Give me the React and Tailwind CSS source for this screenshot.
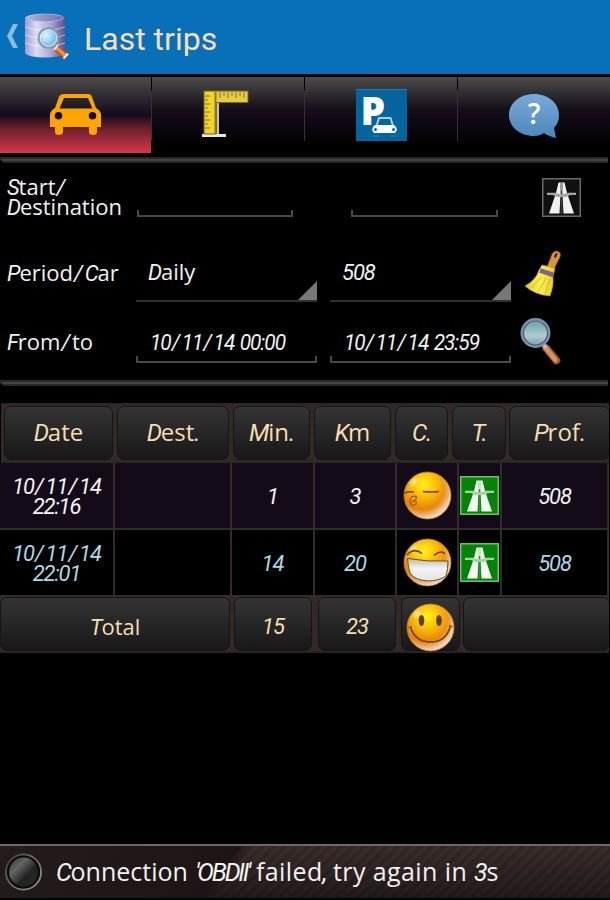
import React from "react";

const RUNS = /([0-9A-Z]+)|(\/)|([:.,'])|([a-z]+)|(\s+)/g;

function Lcd({ children, className = "", tight }) {
  const runs = [...children.matchAll(RUNS)];
  const spacing = tight ? "tracking-[-0.09em]" : "tracking-[-0.05em]";
  return (
    <span className={`whitespace-pre ${className}`}>
      {runs.map((m, i) => {
        if (m[1]) return <span key={i} className={`font-[Roboto,sans-serif] italic ${spacing}`}>{m[1]}</span>;
        if (m[2]) return <span key={i} className="font-[Roboto,sans-serif] italic pl-[0.05em] pr-[0.08em]">{m[2]}</span>;
        if (m[3]) return <span key={i} className={`font-[Roboto,sans-serif] italic ${spacing}`}>{m[3]}</span>;
        if (m[5]) return <span key={i}>{m[5]}</span>;
        return <span key={i} className="font-['Open_Sans',sans-serif]">{m[4]}</span>;
      })}
    </span>
  );
}

function DatabaseIcon() {
  return (
    <svg width="48" height="50" viewBox="0 0 48 50">
      <defs>
        <linearGradient id="db" x1="0" x2="1">
          <stop offset="0" stopColor="#9c9ad0" /><stop offset=".28" stopColor="#dcdbf5" />
          <stop offset=".65" stopColor="#a8a6d2" /><stop offset="1" stopColor="#55538a" />
        </linearGradient>
        <linearGradient id="dbTop" x1="0" x2="1">
          <stop offset="0" stopColor="#b4b2dc" /><stop offset="1" stopColor="#6f6da2" />
        </linearGradient>
        <radialGradient id="dbLens" cx=".35" cy=".35">
          <stop offset="0" stopColor="#e2f6ff" /><stop offset="1" stopColor="#7fc4ee" />
        </radialGradient>
      </defs>
      <path d="M0 6C0 1 40 1 40 6V41C37 47 3 47 0 41Z" fill="url(#db)" />
      <ellipse cx="20" cy="5.800" rx="18.500" ry="3.800" fill="url(#dbTop)" stroke="#c5c3ec" strokeWidth=".6" />
      <path d="M0 15Q20 22 40 15M0 23Q20 30 40 23M0 31Q20 38 40 31" fill="none" stroke="#f2f1ff" strokeWidth="1" opacity=".6" />
      <path d="M31 36L42 45" stroke="#b9532a" strokeWidth="6.500" />
      <path d="M31.500 36L41.500 44.500" stroke="#ff8b3c" strokeWidth="3.500" />
      <path d="M43 41.500l-4.500 5M33 33l-4 5" stroke="#eee" strokeWidth="2" />
      <circle cx="23.500" cy="26" r="9.800" fill="url(#dbLens)" stroke="#8a9a9e" strokeWidth="2" />
      <circle cx="23.500" cy="26" r="8.300" fill="none" stroke="#d9f2fb" strokeWidth=".8" />
    </svg>
  );
}

function CarIcon() {
  return (
    <svg width="52" height="42" viewBox="0 0 52 42">
      <path fillRule="evenodd" fill="#ffa500" d="M14 0H38Q41 0 42 3L46 14Q51 17 51 21V33H47V38Q47 41 43 41Q39 41 39 38V33H13V38Q13 41 9 41Q5 41 5 38V33H0V21Q0 17 5 14L9 3Q10 0 14 0ZM14 4L9.500 14.500H42.500L38 4ZM8.500 18a3.800 3.800 0 100 7.600a3.800 3.800 0 000-7.600ZM42.500 18a3.800 3.800 0 100 7.600a3.800 3.800 0 000-7.600Z" />
    </svg>
  );
}

function RulerIcon() {
  return (
    <svg width="48" height="48" viewBox="0 0 48 48">
      <path d="M16 12V44" stroke="#c3c3cc" strokeWidth="2" />
      <path d="M0 45.500H24" stroke="#e5e5ea" strokeWidth="3" />
      <path d="M2 1H46V12.500H14.500V44H2Z" fill="#e3cd48" stroke="#7b6412" />
      <path d="M3 2H12V43H3Z" fill="#f0d528" />
      <path d="M13.500 2V44" stroke="#967819" strokeWidth="2" />
      <path d="M3 6h5M3 10h3M3 14h5M3 18h3M3 22h5M3 26h3M3 30h5M3 34h3M3 38h5M18 2v6M22 2v4M26 2v6M30 2v4M34 2v6M38 2v4M42 2v6" stroke="#8d751b" strokeWidth="1" />
    </svg>
  );
}

function ParkingIcon() {
  return (
    <div className="relative h-[52px] w-[51px] border-t border-[#2c79ad] bg-[#04659e]">
      <span className="absolute left-[5px] top-[-1px] font-['Open_Sans',sans-serif] text-[39px] leading-[42px] font-extrabold text-white">P</span>
      <svg className="absolute left-[15px] top-[25px]" width="28" height="23" viewBox="0 0 28 23">
        <path d="M5 1H22L26 10Q28 14 26 18H22V22H19V19H8V22H5V18H1Q-1 14 2 10Z" fill="#04659e" />
        <path d="M5.500 11L8 3H19.500L22 11" fill="none" stroke="#a9cfe4" strokeWidth="2" />
        <path d="M4 10H23Q26 12 26 15L24 18H3L1 15Q1 12 4 10Z" fill="white" />
        <circle cx="4.500" cy="14.500" r="1.500" fill="#04659e" /><circle cx="22.500" cy="14.500" r="1.500" fill="#04659e" />
        <path d="M2 21h6M19 21h6" stroke="#1e75aa" strokeWidth="1.500" />
      </svg>
    </div>
  );
}

function HelpIcon() {
  return (
    <div className="relative h-[46px] w-[52px]">
      <svg width="52" height="46" viewBox="0 0 52 46">
        <defs><linearGradient id="bub" x2="0" y2="1"><stop stopColor="#78aada" /><stop offset="1" stopColor="#4c86ba" /></linearGradient></defs>
        <path d="M26 1C40 1 51 10 51 22Q51 30 46 35L48 45Q40 43 36 40Q32 43 26 43C12 43 1 34 1 22S12 1 26 1Z" fill="url(#bub)" />
      </svg>
      <span className="absolute inset-x-0 top-0 text-center font-['Open_Sans',sans-serif] text-[28px] leading-[41px] font-semibold text-white">?</span>
    </div>
  );
}

function Motorway({ green }) {
  return (
    <svg width="39" height="39" viewBox="0 0 39 39">
      <rect x=".75" y=".75" width="37.500" height="37.500" fill={green ? "#068306" : "#101010"} stroke={green ? "#72bd72" : "#686868"} strokeWidth="1.500" />
      <path d="M16.500 4.500H22.500L25 15L32 35.500H21.500L20.500 17H18.500L17.500 35.500H7L14 15Z" fill={green ? "#f2faf2" : "#f0f0f0"} />
      <path d="M19.500 5V36" stroke={green ? "#2b962b" : "#3a3a3a"} strokeWidth="1.800" />
      <path d="M19.500 5V13" stroke={green ? "#c8e5c8" : "#999"} strokeWidth="3" />
      <path d="M5 14.800H13Q19.500 17.500 26 14.800H34V17H28L24 19H15L11 17H5Z" fill={green ? "#a4d4a4" : "#a6a6a6"} />
    </svg>
  );
}

function Broom() {
  return (
    <svg width="37" height="48" viewBox="0 0 37 48">
      <defs>
        <linearGradient id="straw"><stop stopColor="#e3cd26" /><stop offset=".5" stopColor="#fbee5a" /><stop offset="1" stopColor="#e6cb1e" /></linearGradient>
      </defs>
      <path d="M22 17L27 4Q30-1 34 2Q37 4 34 9L29 19Z" fill="#d89440" stroke="#8c5013" strokeWidth=".7" />
      <path d="M29 6q2-4 3.500-2.500q0 3-2.500 5z" fill="#3d2208" />
      <path d="M17 15L30 18L28 27Q29 36 25 46Q10 45 0 36Q11 30 14 20Z" fill="url(#straw)" stroke="#b69c12" strokeWidth=".7" />
      <path d="M15 20.500L28.500 25" stroke="#83608c" strokeWidth="4.500" />
      <path d="M17 27L6 38M21 28L13 42M25 29L20 45" stroke="#c9ae1c" strokeWidth=".8" />
    </svg>
  );
}

function Magnifier() {
  return (
    <svg width="41" height="48" viewBox="0 0 41 48">
      <defs><linearGradient id="lens" x2="0" y2="1"><stop stopColor="#5c9fa8" /><stop offset=".6" stopColor="#b0cbd1" /><stop offset="1" stopColor="#759ca8" /></linearGradient></defs>
      <path d="M26 31L36.500 43.500" stroke="#9b582b" strokeWidth="7.500" strokeLinecap="round" />
      <path d="M26 31L35.500 43" stroke="#d9945c" strokeWidth="4.500" strokeLinecap="round" />
      <path d="M23 27l3 4" stroke="#bbb" strokeWidth="4" />
      <circle cx="15.500" cy="16" r="13.500" fill="url(#lens)" stroke="#8291a8" strokeWidth="3" />
      <circle cx="15.500" cy="16" r="12" fill="none" stroke="#4a6275" strokeWidth="1.200" />
    </svg>
  );
}

function Smiley({ mood }) {
  return (
    <svg width="49" height="49" viewBox="0 0 49 49">
      <defs>
        <radialGradient id="face" cx=".43" cy=".26" r=".8">
          <stop offset="0" stopColor="#fff21e" /><stop offset=".28" stopColor="#ffc50a" />
          <stop offset=".65" stopColor="#ea8508" /><stop offset="1" stopColor="#d88338" />
        </radialGradient>
        <radialGradient id="shine" cx=".38" cy=".34" r=".67">
          <stop offset=".7" stopColor="#f0dccd" stopOpacity="0" /><stop offset=".97" stopColor="#f0dccd" stopOpacity=".9" />
        </radialGradient>
        <radialGradient id="gleam"><stop stopColor="#fff4cf" stopOpacity=".9" /><stop offset="1" stopColor="#ffe6a0" stopOpacity="0" /></radialGradient>
        <linearGradient id="teeth" x2="0" y2="1"><stop stopColor="#b9b9b9" /><stop offset=".45" stopColor="#f4f4f4" /><stop offset="1" stopColor="#e3e3e3" /></linearGradient>
      </defs>
      <circle cx="24.500" cy="24.500" r="23.500" fill="url(#face)" />
      <circle cx="24.500" cy="24.500" r="23.500" fill="url(#shine)" stroke="#b9762c" strokeWidth=".8" />
      <ellipse cx="11" cy="11" rx="7" ry="4" transform="rotate(-45 11 11)" fill="url(#gleam)" />
      {mood === "kiss" && (
        <g fill="none" stroke="#6b4308" strokeWidth="1.500">
          <path d="M2 22Q6 20 11 21M20 20.500Q28 21.500 36 20.500" />
          <path d="M8 26Q15 24 13 28Q12 30 9 30Q15 30 13 33Q10 36 8 33Q6 30 8 27" stroke="#a4640b" />
        </g>
      )}
      {mood === "grin" && (
        <g>
          <path d="M4.500 20.500Q25 24 45 23Q45 31 43 38Q36 43 25 43Q11 42 7 35Q5 28 4.500 20.500Z" fill="url(#teeth)" stroke="#6c502a" strokeWidth="1" />
          <path d="M4 17Q11 9 19 15.500M31 17.500Q38 11.500 42 16" fill="none" stroke="#65400b" strokeWidth="1.500" />
        </g>
      )}
      {mood === "smile" && (
        <g>
          <ellipse cx="15.500" cy="17.500" rx="2.800" ry="5.500" fill="#5b4010" /><ellipse cx="33" cy="17.500" rx="2.800" ry="5.500" fill="#5b4010" />
          <path d="M4.500 24Q9 39 25 39Q40 39 44.500 23" fill="none" stroke="#694411" strokeWidth="1.600" />
          <path d="M2 25l4-2M43 22l4 2" stroke="#8a540b" />
        </g>
      )}
    </svg>
  );
}

function Tab({ children, active, last }) {
  return (
    <div className={`relative flex h-[80px] shrink-0 ${last ? "w-[152px]" : active ? "w-[152px]" : "w-[153px]"}`}>
      <div className={`flex w-full justify-center ${active ? "mr-px h-[76px] bg-[linear-gradient(#4c4c4c,#140b18_50%,#6c202d_68%,#d8364a)]" : "h-[80px] bg-[linear-gradient(#4c4c4c,#151018_40%,#110a17_50%,#000_85%)]"}`}>{children}</div>
      {!last && <div className="absolute right-0 top-0 h-[64px] w-px bg-[linear-gradient(#000_20%,#343434_22%)]" />}
    </div>
  );
}

const Divider = () => <div className="h-[6px] w-[608px] shrink-0 rounded-bl-[5px] border-y-2 border-[#2b2924] bg-[#464545]" />;

function Underline({ className }) {
  return <div className={`h-[7px] border-x-2 border-b-2 border-[#484848] ${className}`} />;
}

function Spinner({ children }) {
  return (
    <div className="flex h-[50px] w-[181px] justify-between border-b-2 border-[#303030]">
      <span className="pl-[12px] pt-[4px] leading-[30px]"><Lcd>{children}</Lcd></span>
      <svg className="self-end" width="19" height="19"><path d="M19 0V19H0Z" fill="#777" /></svg>
    </div>
  );
}

function DateField({ children }) {
  return (
    <div className="h-[37px] w-[181px]">
      <div className="h-[30px] pl-[14px] text-[22px] leading-[31px]"><Lcd className="inline-block origin-left scale-x-[0.95]">{children}</Lcd></div>
      <Underline className="w-full" />
    </div>
  );
}

function Key({ children, className }) {
  return (
    <div className={`flex shrink-0 items-center justify-center rounded-[7px] border border-[#151515] bg-[linear-gradient(#343434,#181818)] text-[#f5deb3] ${className}`}>{children}</div>
  );
}

function Trip({ date, time, min, km, mood, className }) {
  const cell = "flex shrink-0 items-center justify-center border-r-2 border-[#332a2b] h-full";
  return (
    <div className={`flex h-[67px] shrink-0 border-b-2 border-[#332a2b] text-[22px] ${className}`}>
      <div className={`${cell} w-[115px] flex-col pt-px leading-[19px]`}><Lcd>{date}</Lcd><Lcd>{time}</Lcd></div>
      <div className={`${cell} w-[117px]`} />
      <div className={`${cell} w-[83px] pt-px`}><Lcd>{min}</Lcd></div>
      <div className={`${cell} w-[82px] pt-px`}><Lcd>{km}</Lcd></div>
      <div className={`${cell} w-[62px]`}><Smiley mood={mood} /></div>
      <div className={`${cell} w-[43px]`}><Motorway green /></div>
      <div className={`${cell} w-[107px] pt-px`}><Lcd>508</Lcd></div>
    </div>
  );
}

export default function App() {
  return (
    <main className="flex h-[900px] w-[610px] flex-col overflow-hidden bg-black font-['Open_Sans',sans-serif] text-[22px] text-[#f2f2f2]">
      <header className="flex h-[74px] shrink-0 items-center bg-[#0870b8] pl-[7px]">
        <svg className="-mt-[2px]" width="11" height="24" viewBox="0 0 11 24"><path d="M6 0H11L5 12L11 24H6L0 12Z" fill="#8bbbdc" /></svg>
        <div className="ml-[7px]"><DatabaseIcon /></div>
        <h1 className="ml-[11px] pt-[3px] font-[Roboto,sans-serif] text-[32px] leading-[40px] text-[#f5deb3]">Last trips</h1>
      </header>
      <nav className="flex h-[80px] shrink-0 pt-[3px]">
        <Tab active><div className="pt-[17px]"><CarIcon /></div></Tab>
        <Tab><div className="pt-[13px] pr-[5px]"><RulerIcon /></div></Tab>
        <Tab><div className="pt-[12px] pr-px"><ParkingIcon /></div></Tab>
        <Tab last><div className="pt-[16px]"><HelpIcon /></div></Tab>
      </nav>
      <section className="flex h-[246px] shrink-0 flex-col pt-[3px]">
        <Divider />
        <div className="flex h-[77px] shrink-0 pl-[7px]">
          <div className="flex w-[130px] flex-col pt-[14px] leading-[19px]"><Lcd>Start/</Lcd><Lcd>Destination</Lcd></div>
          <Underline className="mt-[47px] w-[156px]" />
          <Underline className="ml-[58px] mt-[47px] w-[147px]" />
          <div className="ml-[44px] mt-[15px]"><Motorway /></div>
        </div>
        <div className="flex h-[65px] shrink-0 pl-[7px] pt-[12px]">
          <div className="w-[129px] pt-[5px] leading-[30px]"><Lcd>Period/Car</Lcd></div>
          <Spinner>Daily</Spinner>
          <div className="ml-[13px]"><Spinner>508</Spinner></div>
          <div className="ml-[14px] -mt-[2px]"><Broom /></div>
        </div>
        <div className="flex h-[75px] shrink-0 pl-[7px] pt-[21px]">
          <div className="w-[129px] leading-[30px]"><Lcd>From/to</Lcd></div>
          <DateField>10/11/14 00:00</DateField>
          <div className="ml-[13px]"><DateField>10/11/14 23:59</DateField></div>
          <div className="ml-[9px] -mt-[9px]"><Magnifier /></div>
        </div>
        <Divider />
      </section>
      <section className="mt-[3px] flex h-[250px] w-[609px] shrink-0 flex-col overflow-hidden">
        <div className="ml-px flex h-[60px] shrink-0 border-y-2 border-[#2a2725] bg-[#352928] pl-[3px] pt-px text-[24px]">
          <Key className="mr-[4px] h-[54px] w-[109px] pb-[2px]"><Lcd>Date</Lcd></Key>
          <Key className="mr-[4px] h-[54px] w-[112px] pb-[2px]"><Lcd>Dest.</Lcd></Key>
          <Key className="mr-[4px] h-[54px] w-[77px] pb-[2px]"><Lcd>Min.</Lcd></Key>
          <Key className="mr-[4px] h-[54px] w-[77px] pb-[2px]"><Lcd>Km</Lcd></Key>
          <Key className="mr-[4px] h-[54px] w-[53px] pb-[2px]"><Lcd>C.</Lcd></Key>
          <Key className="mr-[3px] h-[54px] w-[54px] pb-[2px]"><Lcd>T.</Lcd></Key>
          <Key className="h-[54px] w-[101px] pb-[2px]"><Lcd>Prof.</Lcd></Key>
        </div>
        <Trip date="10/11/14" time="22:16" min="1" km="3" mood="kiss" className="bg-[#130c18] text-[#f4f4f4]" />
        <Trip date="10/11/14" time="22:01" min="14" km="20" mood="grin" className="bg-black text-[#add8e6]" />
        <div className="flex h-[56px] shrink-0 border-b-2 border-[#2a2221] bg-[#352928] pb-px">
          <Key className="h-[54px] w-[230px] pt-[5px]"><Lcd>Total</Lcd></Key>
          <Key className="ml-[4px] h-[54px] w-[78px] pt-[3px]"><Lcd>15</Lcd></Key>
          <Key className="ml-[6px] h-[54px] w-[78px] pt-[3px]"><Lcd>23</Lcd></Key>
          <Key className="ml-[5px] h-[54px] w-[59px] pt-[6px]"><Smiley mood="smile" /></Key>
          <Key className="ml-[3px] h-[54px] w-[147px]" />
        </div>
      </section>
      <footer className="mt-auto mb-[2px] flex h-[54px] shrink-0 items-center border-t-2 border-[#6e6867] bg-[linear-gradient(125deg,#241b1b_0%,#1d1515_37%,transparent_39%),repeating-linear-gradient(135deg,#00000026_0px,#00000026_3px,transparent_5px,transparent_8px),linear-gradient(#3b2e2d,#231b1b)] pl-[5px]">
        <svg width="38" height="40" viewBox="0 0 38 40">
          <defs><linearGradient id="led" x2="1" y2="1"><stop offset=".1" stopColor="#333" /><stop offset=".35" stopColor="#666" /><stop offset=".6" stopColor="#222" /><stop offset="1" stopColor="#2c2c2c" /></linearGradient>
            <linearGradient id="rim" x2="1" y2="1"><stop stopColor="#3a3a3a" /><stop offset="1" stopColor="#999" /></linearGradient></defs>
          <circle cx="18.500" cy="20" r="17.500" fill="url(#led)" stroke="url(#rim)" strokeWidth="2" />
          <circle cx="18.500" cy="20" r="15.500" fill="none" stroke="#0b0b0b" strokeWidth="2.200" />
        </svg>
        <p className="ml-[13px] whitespace-pre text-[25px] leading-[40px]">
          <Lcd>Connection </Lcd><Lcd tight className="ml-px">'OBDII'</Lcd><Lcd className="tracking-[0.016em]"> failed, try again in 3s</Lcd>
        </p>
      </footer>
    </main>
  );
}
